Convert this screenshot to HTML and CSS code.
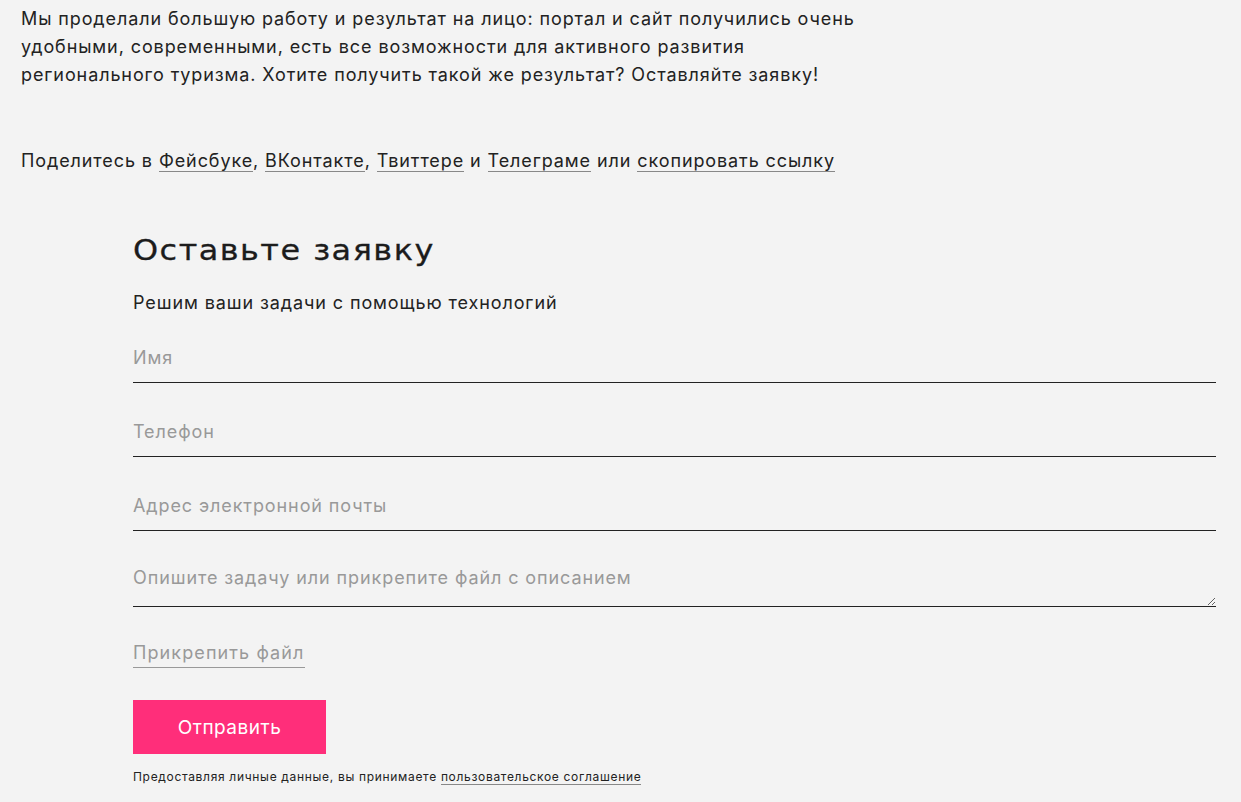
FILE: index.html
```html
<!DOCTYPE html>
<html lang="ru">
<head>
<meta charset="utf-8">
<title>Оставьте заявку</title>
<link rel="stylesheet" href="styles.css">
</head>
<body>
<div class="page">
  <p class="intro">Мы проделали большую работу и результат на лицо: портал и сайт получились очень удобными, современными, есть все возможности для активного развития регионального туризма. Хотите получить такой же результат? Оставляйте заявку!</p>
  <p class="share">Поделитесь в <a href="#">Фейсбуке</a>, <a href="#">ВКонтакте</a>, <a href="#">Твиттере</a> и <a href="#">Телеграме</a> или <a href="#">скопировать ссылку</a></p>

  <form class="form">
    <h2 class="form-title">Оставьте заявку</h2>
    <p class="form-sub">Решим ваши задачи с помощью технологий</p>
    <label class="field field-first"><input type="text" placeholder="Имя"></label>
    <label class="field"><input type="text" placeholder="Телефон"></label>
    <label class="field"><input type="text" placeholder="Адрес электронной почты"></label>
    <label class="field field-area"><textarea placeholder="Опишите задачу или прикрепите файл с описанием"></textarea></label>
    <div class="attach"><span>Прикрепить файл</span></div>
    <button type="button" class="submit">Отправить</button>
    <p class="note">Предоставляя личные данные, вы принимаете <a href="#">пользовательское соглашение</a></p>
  </form>
</div>
</body>
</html>
```
FILE: styles.css
```css
* { box-sizing: border-box; }
html, body { margin: 0; padding: 0; background: #f3f3f3; }
body {
  font-family: "Inter", "Roboto", "Liberation Sans", sans-serif;
  color: #222;
  overflow: hidden;
  letter-spacing: 0.9px;
}
.page { padding: 5px 0 0 21px; }
.intro {
  margin: 0;
  width: 850px;
  font-size: 18px;
  line-height: 28px;
}
.share {
  margin: 58px 0 0;
  font-size: 18px;
  line-height: 28px;
}
.share a, .note a {
  color: #222;
  text-decoration: none;
  border-bottom: 1px solid #888;
}
.form {
  margin: 0 0 0 112px;
  width: 1083px;
  display: flex;
  flex-direction: column;
}
.form-title {
  margin: 58px 0 0;
  font-family: "DejaVu Sans", sans-serif;
  font-weight: 400;
  font-size: 28px;
  line-height: 36px;
  letter-spacing: 1.3px;
  color: #1c1c1c;
  transform: scaleX(1.14);
  transform-origin: left;
  align-self: flex-start;
  -webkit-text-stroke: 0.3px #1c1c1c;
}
.form-sub {
  margin: 20px 0 0;
  font-size: 18px;
  line-height: 28px;
}
.field {
  display: block;
  border-bottom: 1px solid #222;
  margin-top: 35px;
}
.field-first { margin-top: 27px; }
.field input, .field textarea {
  display: block;
  width: 100%;
  border: 0;
  background: transparent;
  font: inherit;
  font-size: 18px;
  line-height: 28px;
  letter-spacing: 0.9px;
  padding: 0 0 10px;
  color: #222;
  outline: none;
}
.field input::placeholder, .field textarea::placeholder { color: #999; }
.field-area { margin-top: 33px; }
.field-area textarea { height: 42px; padding: 0; resize: vertical; overflow: hidden; }
.attach { margin-top: 32px; }
.attach span {
  font-size: 18px;
  color: #999;
  border-bottom: 1px solid #999;
  display: inline-block;
  line-height: 28px;
  letter-spacing: 1.1px;
}
.submit {
  margin-top: 32px;
  width: 193px;
  height: 54px;
  border: 0;
  background: #ff2e7a;
  color: #fff;
  font-family: inherit;
  font-size: 19px;
  letter-spacing: 0.5px;
  align-self: flex-start;
}
.note {
  margin: 14px 0 0;
  font-size: 12px;
  line-height: 18px;
  letter-spacing: 0.68px;
}
```
